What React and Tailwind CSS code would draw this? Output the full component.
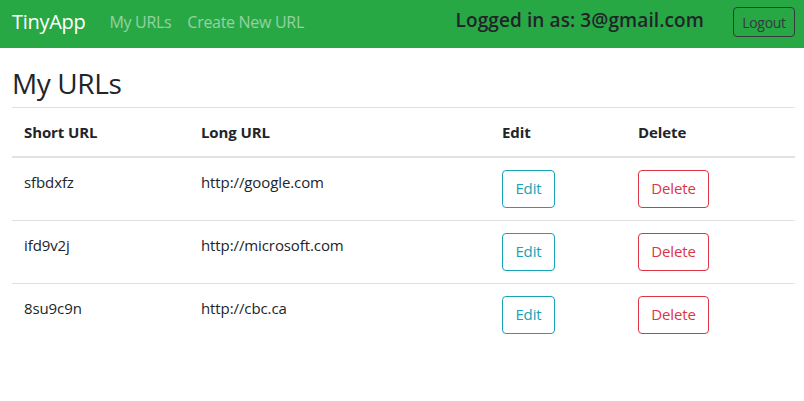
import React from 'react';

const urls = [
  { short: 'sfbdxfz', long: 'http://google.com' },
  { short: 'ifd9v2j', long: 'http://microsoft.com' },
  { short: '8su9c9n', long: 'http://cbc.ca' },
];

export default function App() {
  return (
    <div className="min-h-[401px] bg-white text-[#212529]" style={{ fontFamily: '"Open Sans", "Noto Sans", sans-serif' }}>
      {/* Navbar */}
      <nav className="h-12 bg-[#28a745] flex items-center pl-3 pr-[9px]">
        <span className="text-[20px] text-white leading-[30px] mr-4 -mt-1 tracking-[-0.3px]">TinyApp</span>
        <a className="px-2 text-[16px] text-white/50 -mt-1 tracking-[-0.3px]">My URLs</a>
        <a className="px-2 text-[16px] text-white/50 -mt-1 tracking-[-0.3px]">Create New URL</a>
        <div className="flex-1" />
        <span className="text-[19px] font-semibold text-[#212529] -mt-2 mr-[29px] tracking-[0.1px]">Logged in as: 3@gmail.com</span>
        <button className="h-[30px] w-[62px] -mt-[4px] border border-[#343a40] rounded text-[14px] text-[#343a40] tracking-[-0.3px]">Logout</button>
      </nav>

      {/* Main content */}
      <div className="pl-3 pr-[9px]">
        <h2 className="text-[28px] font-medium leading-[1.2] mt-[19px] mb-[6px] tracking-[-0.4px]">My URLs</h2>
        <table className="w-full border-collapse text-[15px] tracking-[-0.1px]">
          <thead>
            <tr className="border-t border-[#dee2e6]">
              <th className="w-[177px] text-left font-bold px-3 py-3 leading-6 border-b-2 border-[#dee2e6]">Short URL</th>
              <th className="w-[301px] text-left font-bold px-3 py-3 leading-6 border-b-2 border-[#dee2e6]">Long URL</th>
              <th className="w-[136px] text-left font-bold px-3 py-3 leading-6 border-b-2 border-[#dee2e6]">Edit</th>
              <th className="text-left font-bold px-3 py-3 leading-6 border-b-2 border-[#dee2e6]">Delete</th>
            </tr>
          </thead>
          <tbody>
            {urls.map((u, i) => (
              <tr key={u.short} className={i > 0 ? 'border-t border-[#dee2e6]' : ''}>
                <td className="px-3 py-3 align-top leading-6">{u.short}</td>
                <td className="px-3 py-3 align-top leading-6">{u.long}</td>
                <td className="px-3 py-3 align-top">
                  <button className="h-[38px] w-[53px] border border-[#17a2b8] rounded text-[#17a2b8] text-[15px]">Edit</button>
                </td>
                <td className="px-3 py-3 align-top">
                  <button className="h-[38px] w-[71px] border border-[#dc3545] rounded text-[#dc3545] text-[15px]">Delete</button>
                </td>
              </tr>
            ))}
          </tbody>
        </table>
      </div>
    </div>
  );
}
